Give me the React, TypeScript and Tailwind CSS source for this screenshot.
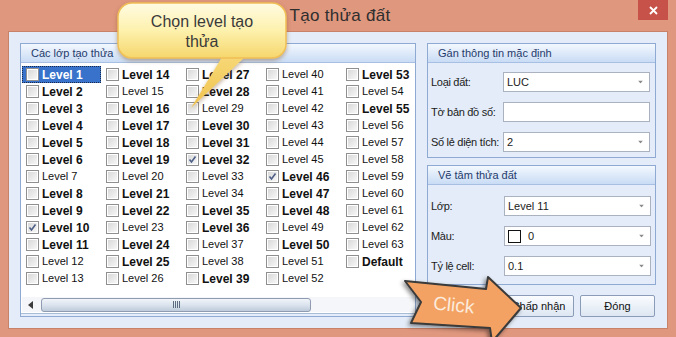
import React from 'react';

const boldIds = new Set([1, 2, 3, 4, 5, 6, 8, 9, 10, 11, 14, 16, 17, 18, 19, 21, 22, 24, 25, 27, 28, 30, 31, 32, 35, 36, 39, 46, 47, 48, 50, 53, 55]);
const checkedIds = new Set([10, 32, 46]);

type Item = { id: number; label: string; bold: boolean; checked: boolean };

const items: Item[] = [];
for (let i = 1; i <= 63; i++) {
  items.push({ id: i, label: `Level ${i}`, bold: boldIds.has(i), checked: checkedIds.has(i) });
}
items.push({ id: 64, label: 'Default', bold: true, checked: false });

const CheckBox = ({ checked }: { checked?: boolean }) => (
  <span className="w-[13px] h-[13px] shrink-0 border border-[#8f8f8f] bg-white p-[1px] flex">
    <span className="flex-1 bg-gradient-to-br from-[#d9d9d9] to-[#f7f7f7] flex items-center justify-center">
      {checked && (
        <svg width="9" height="9" viewBox="0 0 9 9">
          <path d="M1.5 4.5 L3.5 7 L7.5 1.5" fill="none" stroke="#4d5f86" strokeWidth="1.6" />
        </svg>
      )}
    </span>
  </span>
);

const Arrow = () => (
  <svg width="5" height="3" viewBox="0 0 5 3" className="absolute right-[6px] top-1/2 -translate-y-1/2">
    <path d="M0 0 H5 L2.5 3 Z" fill="#8a8a8a" />
  </svg>
);

const Combo = ({ children, dropdown = true }: { children?: React.ReactNode; dropdown?: boolean }) => (
  <div className="relative w-[147px] h-[20px] bg-white border border-[#abb2bf] flex items-center pl-[3px] text-[11px] text-[#1b1b1b]">
    {children}
    {dropdown && <Arrow />}
  </div>
);

const GroupHeader = ({ title }: { title: string }) => (
  <div className="h-[19px] shrink-0 bg-gradient-to-b from-[#f3f8fe] to-[#c9dcf5] border-b border-[#a6bfe2] flex items-center pl-[10px] text-[11px] text-[#1f3b6b]">
    {title}
  </div>
);

const Row = ({ label, children }: { label: string; children: React.ReactNode }) => (
  <div className="flex items-center h-[20px]">
    <span className="w-[75px] pl-[3px] text-[11px] tracking-[-0.3px] text-[#1b1b1b] whitespace-nowrap">{label}</span>
    {children}
  </div>
);

export default function App() {
  return (
    <div className="relative w-[676px] h-[337px] overflow-hidden bg-[#df977e] font-['Liberation_Sans',Arial,sans-serif]">
      {/* title bar */}
      <div className="relative h-[31px] flex items-center justify-center">
        <span className="text-[17px] text-[#2e2e2e] ml-[4px] tracking-[0.3px]">Tạo thửa đất</span>
        <div className="absolute right-[8px] top-0 w-[30px] h-[20px] bg-[#c7524a] flex items-center justify-center">
          <svg width="9" height="9" viewBox="0 0 9 9">
            <path d="M1 1 L8 8 M8 1 L1 8" stroke="#fff" strokeWidth="1.8" />
          </svg>
        </div>
      </div>

      {/* body */}
      <div className="mx-[8px] h-[298px] bg-[#e3ecf8] border border-[#c9826a] flex pl-[11px] pt-[11px]">
        {/* left group */}
        <div className="w-[396px] h-[274px] border border-[#8ea9d2] flex flex-col pb-[2px]">
          <GroupHeader title="Các lớp tạo thửa" />
          <div className="flex-1 bg-white border-b border-[#a9bcd6] flex flex-col justify-between pt-[3px] pl-[1px] pb-[1px]">
            <div className="grid grid-flow-col grid-rows-[repeat(13,17px)] auto-cols-[80px]">
              {items.map((it) => {
                const sel = it.id === 1;
                return (
                  <div
                    key={it.id}
                    className={`flex items-center h-[17px] pl-[3px] gap-[3px] whitespace-nowrap ${
                      sel ? 'bg-[#3872cb] border border-dotted border-[#1a2a4a] w-[79px]' : 'border border-transparent'
                    }`}
                  >
                    <CheckBox checked={it.checked} />
                    <span
                      className={`${it.bold ? 'font-bold text-[12px]' : 'text-[11px]'} ${
                        sel ? 'text-white' : 'text-[#111]'
                      }`}
                    >
                      {it.label}
                    </span>
                  </div>
                );
              })}
            </div>
            {/* horizontal scrollbar */}
            <div className="h-[15px] bg-[#f4f6f9] flex items-center">
              <svg width="5" height="8" viewBox="0 0 5 8" className="ml-[6px]">
                <path d="M5 0 V8 L0 4 Z" fill="#3c3c3c" />
              </svg>
              <div className="ml-[8px] w-[270px] h-[14px] rounded-[3px] border border-[#8e9bb0] bg-gradient-to-b from-[#f2f5f9] via-[#dbe3ee] to-[#bfcbdb] flex items-center justify-center gap-[1px]">
                {[0, 1, 2, 3].map((k) => (
                  <span key={k} className="w-[1px] h-[7px] bg-[#5d6b80]" />
                ))}
              </div>
            </div>
          </div>
        </div>

        {/* right column */}
        <div className="ml-[11px] w-[229px] flex flex-col">
          <div className="h-[115px] border border-[#8ea9d2] flex flex-col">
            <GroupHeader title="Gán thông tin mặc định" />
            <div className="flex flex-col gap-[10px] pt-[9px]">
              <Row label="Loại đất:">
                <Combo>LUC</Combo>
              </Row>
              <Row label="Tờ bản đồ số:">
                <Combo dropdown={false} />
              </Row>
              <Row label="Số lẻ diện tích:">
                <Combo>2</Combo>
              </Row>
            </div>
          </div>

          <div className="mt-[7px] h-[120px] border border-[#8ea9d2] flex flex-col">
            <GroupHeader title="Vẽ tâm thửa đất" />
            <div className="flex flex-col gap-[10px] pt-[11px]">
              <Row label="Lớp:">
                <span className="ml-[1px]" />
                <Combo>Level 11</Combo>
              </Row>
              <Row label="Màu:">
                <span className="ml-[1px]" />
                <Combo>
                  <span className="w-[13px] h-[13px] border border-[#111] bg-white mr-[7px]" />0
                </Combo>
              </Row>
              <Row label="Tỷ lệ cell:">
                <span className="ml-[1px]" />
                <Combo>0.1</Combo>
              </Row>
            </div>
          </div>

          <div className="mt-[10px] flex gap-[6px] pl-[76px]">
            <button className="w-[71px] h-[22px] rounded-[2px] border border-[#8b9cb8] bg-gradient-to-b from-[#fafcff] to-[#dde6f1] text-[11px] text-[#111]">
              Chấp nhận
            </button>
            <button className="w-[75px] h-[22px] rounded-[2px] border border-[#8b9cb8] bg-gradient-to-b from-[#fafcff] to-[#dde6f1] text-[11px] text-[#111]">
              Đóng
            </button>
          </div>
        </div>
      </div>

      {/* callout bubble */}
      <svg className="absolute left-[112px] top-0 overflow-visible" width="185" height="115" viewBox="0 0 185 115">
        <defs>
          <linearGradient id="bub" x1="0" y1="0" x2="0" y2="1">
            <stop offset="0" stopColor="#fffbe2" />
            <stop offset="0.5" stopColor="#fdf1ad" />
            <stop offset="1" stopColor="#f6d66c" />
          </linearGradient>
          <linearGradient id="tail" x1="0" y1="0" x2="0" y2="1">
            <stop offset="0" stopColor="#f7d978" />
            <stop offset="1" stopColor="#f0c24e" />
          </linearGradient>
          <filter id="sh" x="-20%" y="-20%" width="140%" height="150%">
            <feDropShadow dx="0" dy="2" stdDeviation="2" floodColor="#7a4a20" floodOpacity="0.45" />
          </filter>
        </defs>
        <g filter="url(#sh)">
          <polygon points="112,54 136,54 79,108" fill="url(#tail)" />
          <rect x="6" y="3" width="168" height="55" rx="14" fill="url(#bub)" stroke="#f0bf55" strokeWidth="1.5" />
        </g>
      </svg>
      <div className="absolute left-[118px] top-[12px] w-[168px] text-center text-[16px] leading-[20px] text-[#3a3a3a]">
        Chọn level tạo
        <br />
        thửa
      </div>

      {/* click arrow */}
      <svg className="absolute left-[395px] top-[262px] overflow-visible" width="135" height="80" viewBox="0 0 135 80">
        <defs>
          <filter id="ash" x="-20%" y="-20%" width="140%" height="150%">
            <feDropShadow dx="-2" dy="2" stdDeviation="2" floodColor="#000" floodOpacity="0.45" />
          </filter>
        </defs>
        <polygon
          points="10,19 91,27 93,15 126,46 97,80 95,66 16,61 26,40"
          fill="#f3a263"
          stroke="#3a3a3a"
          strokeWidth="2"
          strokeLinejoin="round"
          filter="url(#ash)"
        />
        <text
          x="38"
          y="49"
          fontSize="19"
          fill="#fcebdc"
          fontFamily="Liberation Sans, Arial, sans-serif"
          transform="rotate(6 55 45)"
        >
          Click
        </text>
      </svg>
    </div>
  );
}
